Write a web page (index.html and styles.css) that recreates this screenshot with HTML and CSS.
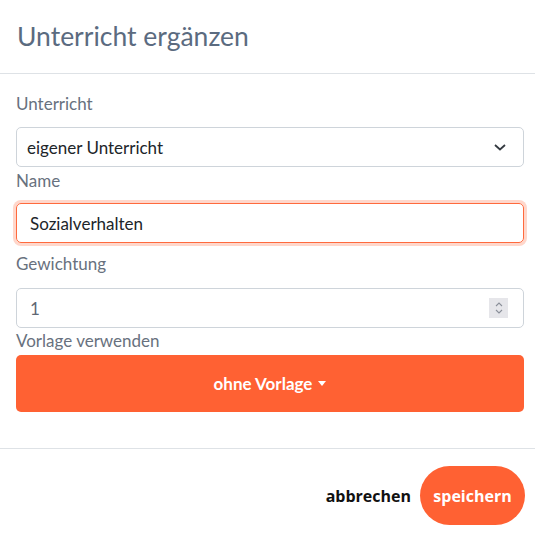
FILE: index.html
```html
<!DOCTYPE html>
<html lang="de">
<head>
<meta charset="utf-8">
<link rel="stylesheet" href="styles.css">
</head>
<body>
<div class="modal">
  <div class="modal-header">
    <h1 class="title">Unterricht ergänzen</h1>
  </div>
  <div class="modal-body">
    <label class="label l-first">Unterricht</label>
    <div class="control select">
      <span>eigener Unterricht</span>
      <svg class="chev" width="14" height="10" viewBox="0 0 14 10"><path d="M2 3 L7 7.5 L12 3" fill="none" stroke="#343a40" stroke-width="1.8"/></svg>
    </div>
    <label class="label l-name">Name</label>
    <div class="control focus">Sozialverhalten</div>
    <label class="label l-weight">Gewichtung</label>
    <div class="control number">
      <span>1</span>
      <span class="spin"><svg width="14" height="20" viewBox="0 0 14 20"><path d="M4 8 L7 5 L10 8 M4 12 L7 15 L10 12" fill="none" stroke="#8a8f99" stroke-width="1.1"/></svg></span>
    </div>
    <label class="label l-tpl">Vorlage verwenden</label>
    <button class="tpl">ohne Vorlage <span class="caret"></span></button>
  </div>
  <div class="modal-footer">
    <button class="cancel">abbrechen</button>
    <button class="save">speichern</button>
  </div>
</div>
</body>
</html>
```
FILE: styles.css
```css
* { box-sizing: border-box; }
html, body { margin: 0; padding: 0; background: #fff; }
body { font-family: Lato, "Liberation Sans", sans-serif; color: #212529; }
.modal { width: 535px; }
.modal-header {
  padding: 16px 17px 17px;
  border-bottom: 1px solid #dee2e6;
}
.title {
  margin: 0;
  font-size: 26.5px;
  font-weight: 400;
  line-height: 40px;
  color: #5b6b80;
}
.modal-body {
  padding: 19px 11px 36px 16px;
  display: flex;
  flex-direction: column;
}
.label {
  display: block;
  font-size: 17px;
  line-height: 22px;
  color: #68717e;
}
.l-first { margin: 0 0 12px; }
.l-name { margin: 3px 0 11px; }
.l-weight { margin: 10px 0 13px; }
.l-tpl { margin: 2px 0 3px; }
.control {
  height: 40px;
  border: 1px solid #ced4da;
  border-radius: 5px;
  display: flex;
  align-items: center;
  justify-content: space-between;
  font-size: 17px;
  color: #212529;
}
.select { padding: 0 16px 0 10px; }
.chev { display: block; }
.focus {
  border-color: #ff6a3d;
  box-shadow: 0 0 0 3px #ffd7cb;
  padding: 0 13px;
}
.number { padding: 0 15px 0 13px; color: #5f6773; }
.spin {
  width: 19px; height: 20px;
  background: #e6e6ea;
  display: flex; align-items: center; justify-content: center;
}
.spin svg { display: block; }
.tpl {
  height: 57px;
  border: none;
  border-radius: 5px;
  background: #ff6133;
  color: #fff;
  font-family: Lato, "Liberation Sans", sans-serif;
  font-weight: 700;
  font-size: 17px;
  display: flex; align-items: center; justify-content: center;
  gap: 6px;
}
.caret {
  width: 0; height: 0;
  border-left: 4.5px solid transparent;
  border-right: 4.5px solid transparent;
  border-top: 5px solid #fff;
}
.modal-footer {
  border-top: 1px solid #dee2e6;
  padding: 17px 10px 11px;
  display: flex;
  justify-content: flex-end;
  align-items: center;
  gap: 9px;
}
.cancel {
  background: none; border: none;
  font-family: "Open Sans", sans-serif;
  font-weight: 700; font-size: 16px; color: #111;
  padding: 0;
}
.save {
  width: 105px; height: 59px;
  border: none; border-radius: 30px;
  background: #ff6133; color: #fff;
  font-family: "Open Sans", sans-serif;
  font-weight: 700; font-size: 16px;
}
```
